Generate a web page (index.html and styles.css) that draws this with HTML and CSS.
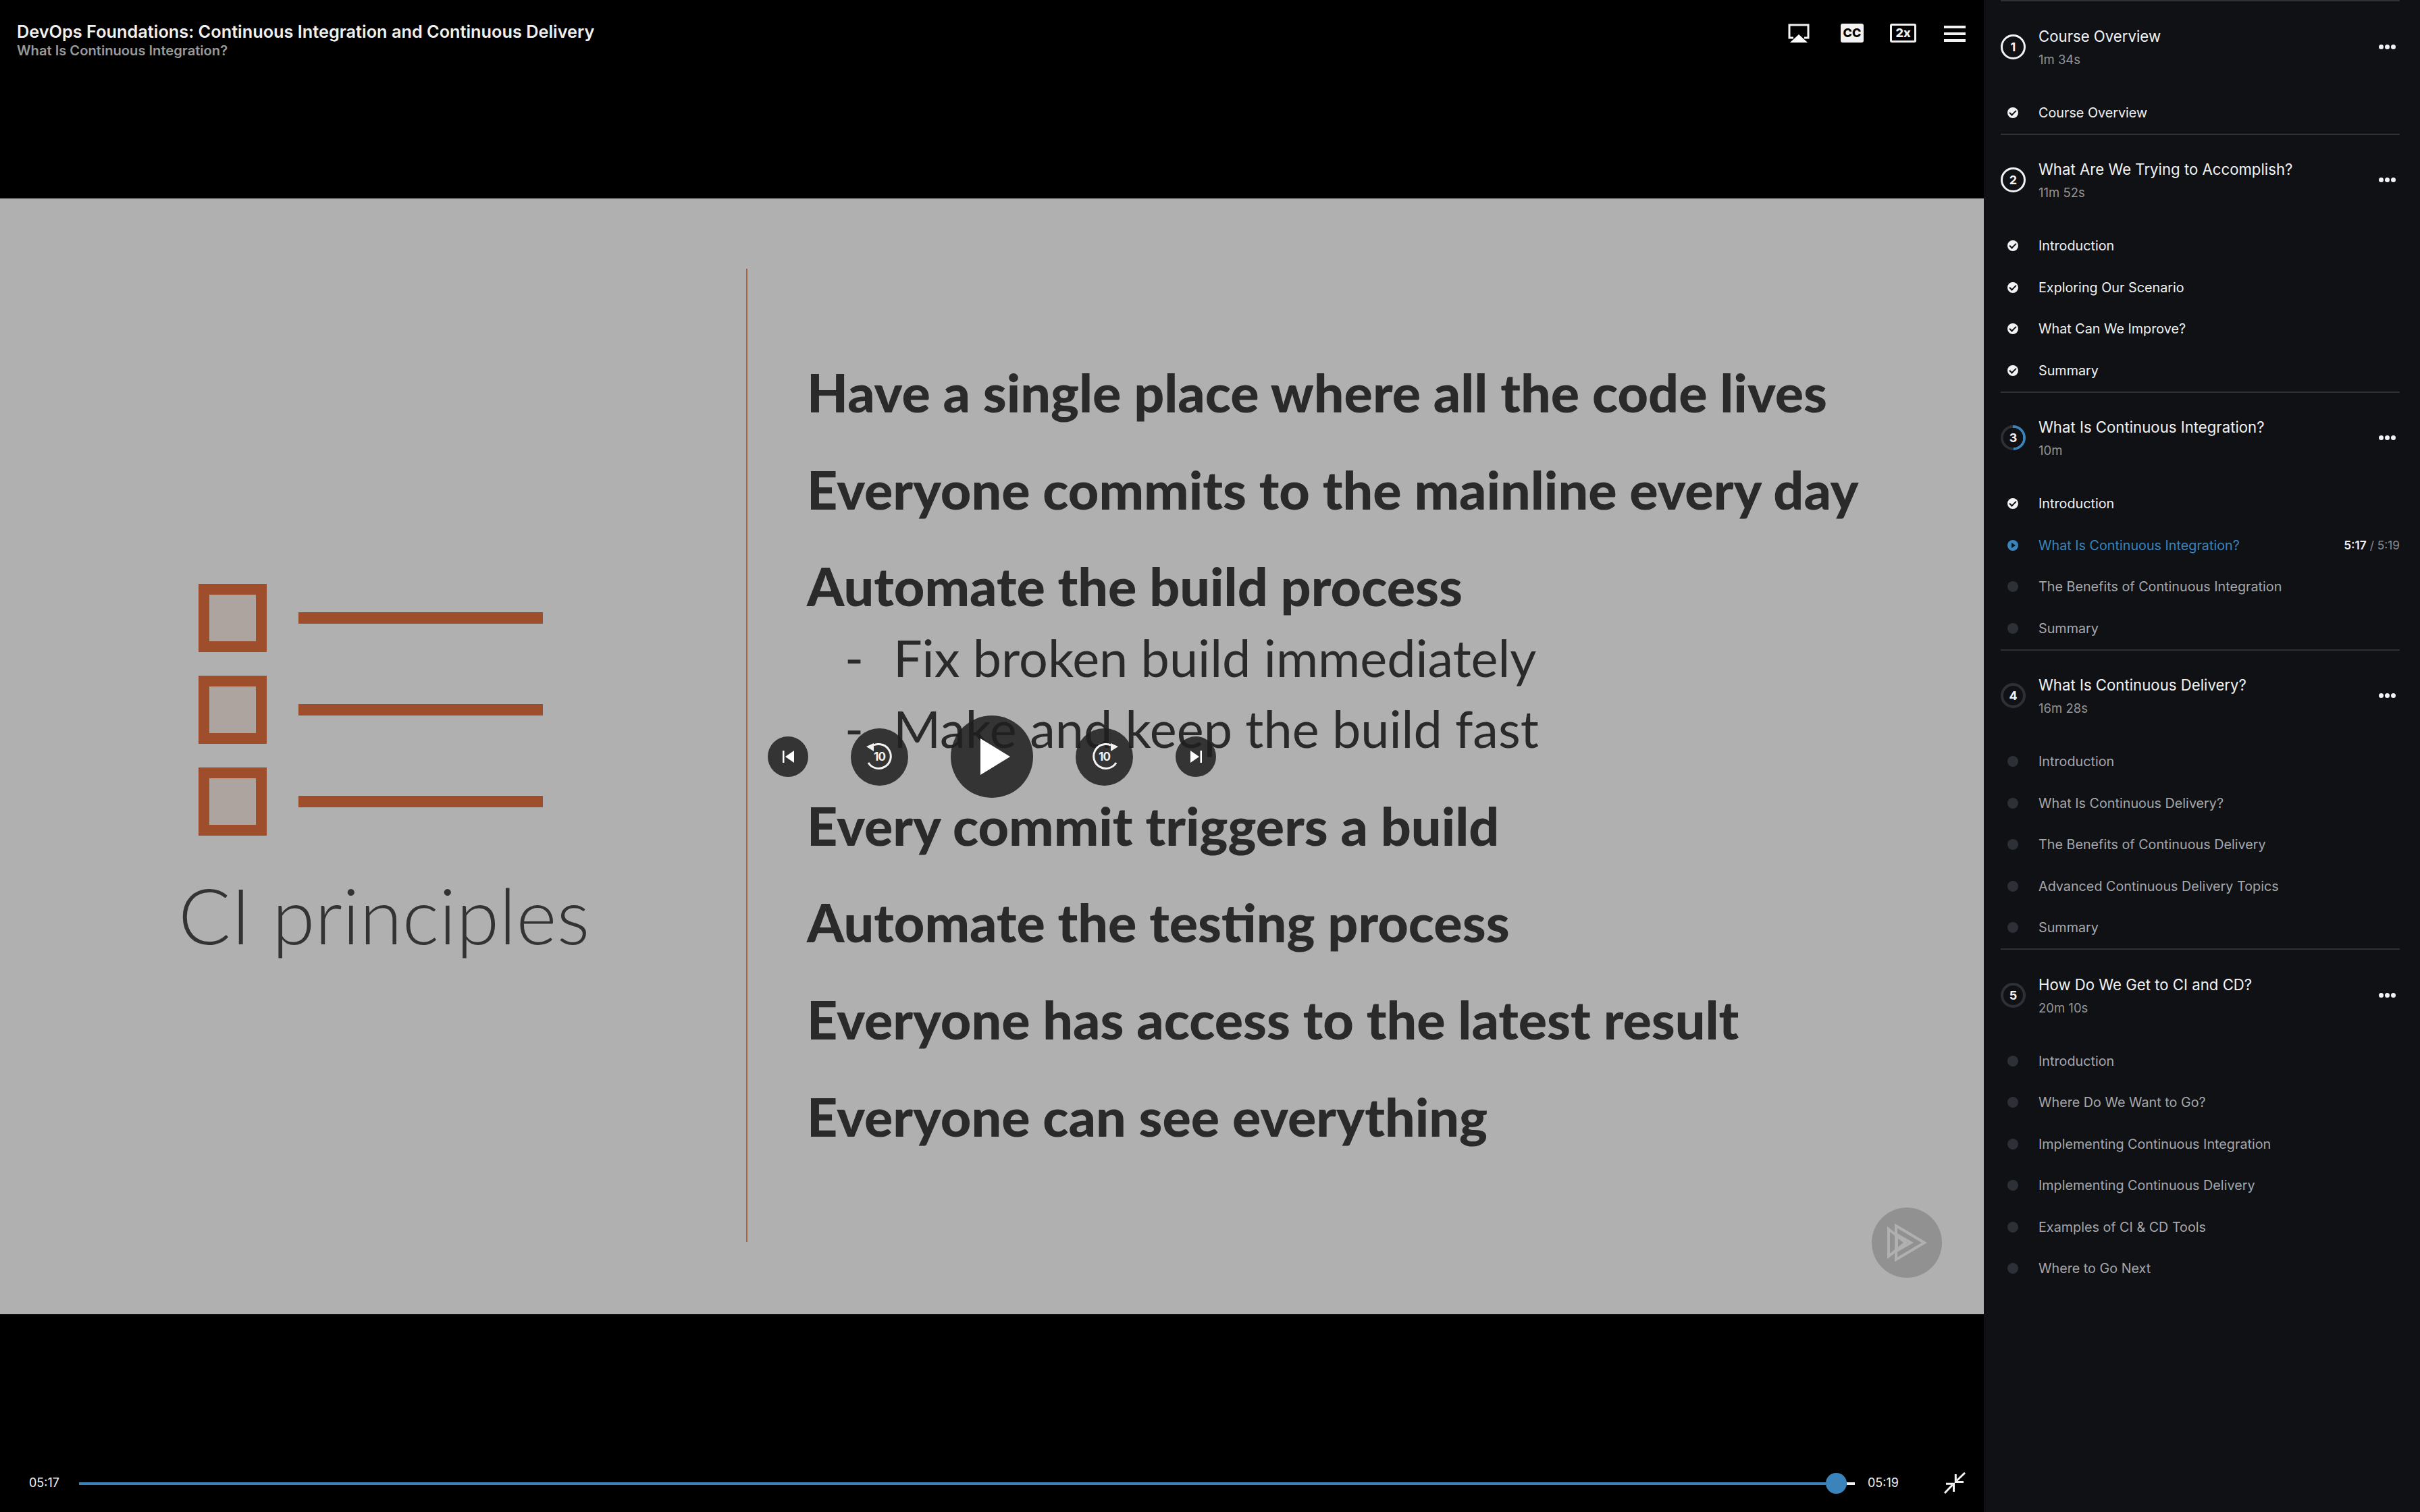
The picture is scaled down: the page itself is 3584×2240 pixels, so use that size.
FILE: index.html
```html
<!DOCTYPE html>
<html lang="en">
<head>
    <meta charset="UTF-8">
    <title>What Is Continuous Integration?</title>
    <link rel="stylesheet" href="styles.css">
</head>
<body>
    <div class="player">
        <header class="top-bar">
            <div class="titles">
                <div class="course-title">DevOps Foundations: Continuous Integration and Continuous Delivery</div>
                <div class="clip-title">What Is Continuous Integration?</div>
            </div>
            <div class="top-icons">
                <svg class="icon-airplay" width="32" height="28" viewBox="0 0 32 28">
                    <path d="M8 21H2V2h28v19h-6" fill="none" stroke="#f2f2f2" stroke-width="3"/>
                    <path d="M16 16L29 28H3z" fill="#fff"/>
                </svg>
                <div class="icon-cc">CC</div>
                <div class="icon-speed">2x</div>
                <div class="icon-menu"><span></span><span></span><span></span></div>
            </div>
        </header>

        <section class="slide">
            <div class="slide-left">
                <div class="check-row"><div class="check-box"></div><div class="check-line"></div></div>
                <div class="check-row"><div class="check-box"></div><div class="check-line"></div></div>
                <div class="check-row"><div class="check-box"></div><div class="check-line"></div></div>
                <div class="slide-title">CI principles</div>
            </div>
            <div class="slide-rule"></div>
            <div class="slide-list">
                <p class="point">Have a single place where all the code lives</p>
                <p class="point">Everyone commits to the mainline every day</p>
                <p class="point">Automate the build process</p>
                <p class="sub-point first"><span class="dash">-</span>Fix broken build immediately</p>
                <p class="sub-point"><span class="dash">-</span>Make and keep the build fast</p>
                <p class="point after-sub">Every commit triggers a build</p>
                <p class="point">Automate the testing process</p>
                <p class="point">Everyone has access to the latest result</p>
                <p class="point">Everyone can see everything</p>
            </div>
            <div class="watermark">
                <svg width="60" height="56" viewBox="0 0 60 56">
                    <path d="M3 8L28 28 3 48z" fill="none" stroke="#b0b0b0" stroke-width="4"/>
                    <path d="M14 3L56 28 14 53z" fill="none" stroke="#b0b0b0" stroke-width="4"/>
                    <path d="M15 16L36 28 15 40z" fill="none" stroke="#b0b0b0" stroke-width="4"/>
                </svg>
            </div>
        </section>

        <footer class="bottom-bar">
            <span class="time">05:17</span>
            <div class="track">
                <div class="track-done"></div>
                <div class="thumb"></div>
                <div class="track-left"></div>
            </div>
            <span class="time">05:19</span>
            <svg class="icon-collapse" width="32" height="32" viewBox="0 0 32 32">
                <path d="M31 1L19 12.5M29 14.5H17.3V3" fill="none" stroke="#f2f2f2" stroke-width="3"/>
                <path d="M1 31L12.5 19M3 17.3H14.5V29" fill="none" stroke="#f2f2f2" stroke-width="3"/>
            </svg>
        </footer>

        <div class="controls">
            <button class="ctl ctl-sm">
                <svg width="17" height="18" viewBox="0 0 17 18"><path d="M0 0h2.5v18H0zM17 0v18L4 9z" fill="#fff"/></svg>
            </button>
            <button class="ctl ctl-md">
                <svg width="40" height="40" viewBox="0 0 40 40">
                    <path d="M11 3A18 18 0 1 1 3 29" fill="none" stroke="#f2f2f2" stroke-width="3"/>
                    <path d="M0 5L11 0V12z" fill="#f2f2f2"/>
                </svg>
                <span class="ten">10</span>
            </button>
            <button class="ctl ctl-lg">
                <svg width="44" height="54" viewBox="0 0 44 54"><path d="M0 0L44 27 0 54z" fill="#fff"/></svg>
            </button>
            <button class="ctl ctl-md">
                <svg width="40" height="40" viewBox="0 0 40 40">
                    <path d="M29 3A18 18 0 1 0 37 29" fill="none" stroke="#f2f2f2" stroke-width="3"/>
                    <path d="M40 5L29 0V12z" fill="#f2f2f2"/>
                </svg>
                <span class="ten">10</span>
            </button>
            <button class="ctl ctl-sm">
                <svg width="17" height="18" viewBox="0 0 17 18"><path d="M14.5 0H17v18h-2.5zM0 0v18l13-9z" fill="#fff"/></svg>
            </button>
        </div>
    </div>

    <aside class="sidebar">
        <div class="module">
            <div class="module-head">
                <div class="num">1</div>
                <div class="module-text"><div class="module-name">Course Overview</div><div class="module-len">1m 34s</div></div>
                <div class="dots"><span></span><span></span><span></span></div>
            </div>
            <div class="clip done"><span class="clip-dot"></span>Course Overview</div>
        </div>
        <div class="module">
            <div class="module-head">
                <div class="num">2</div>
                <div class="module-text"><div class="module-name">What Are We Trying to Accomplish?</div><div class="module-len">11m 52s</div></div>
                <div class="dots"><span></span><span></span><span></span></div>
            </div>
            <div class="clip done"><span class="clip-dot"></span>Introduction</div>
            <div class="clip done"><span class="clip-dot"></span>Exploring Our Scenario</div>
            <div class="clip done"><span class="clip-dot"></span>What Can We Improve?</div>
            <div class="clip done"><span class="clip-dot"></span>Summary</div>
        </div>
        <div class="module">
            <div class="module-head">
                <div class="num partial">3</div>
                <div class="module-text"><div class="module-name">What Is Continuous Integration?</div><div class="module-len">10m</div></div>
                <div class="dots"><span></span><span></span><span></span></div>
            </div>
            <div class="clip done"><span class="clip-dot"></span>Introduction</div>
            <div class="clip current"><span class="clip-dot"></span>What Is Continuous Integration?<span class="clip-time"><b>5:17</b> / 5:19</span></div>
            <div class="clip"><span class="clip-dot"></span>The Benefits of Continuous Integration</div>
            <div class="clip"><span class="clip-dot"></span>Summary</div>
        </div>
        <div class="module">
            <div class="module-head">
                <div class="num empty">4</div>
                <div class="module-text"><div class="module-name">What Is Continuous Delivery?</div><div class="module-len">16m 28s</div></div>
                <div class="dots"><span></span><span></span><span></span></div>
            </div>
            <div class="clip"><span class="clip-dot"></span>Introduction</div>
            <div class="clip"><span class="clip-dot"></span>What Is Continuous Delivery?</div>
            <div class="clip"><span class="clip-dot"></span>The Benefits of Continuous Delivery</div>
            <div class="clip"><span class="clip-dot"></span>Advanced Continuous Delivery Topics</div>
            <div class="clip"><span class="clip-dot"></span>Summary</div>
        </div>
        <div class="module">
            <div class="module-head">
                <div class="num empty">5</div>
                <div class="module-text"><div class="module-name">How Do We Get to CI and CD?</div><div class="module-len">20m 10s</div></div>
                <div class="dots"><span></span><span></span><span></span></div>
            </div>
            <div class="clip"><span class="clip-dot"></span>Introduction</div>
            <div class="clip"><span class="clip-dot"></span>Where Do We Want to Go?</div>
            <div class="clip"><span class="clip-dot"></span>Implementing Continuous Integration</div>
            <div class="clip"><span class="clip-dot"></span>Implementing Continuous Delivery</div>
            <div class="clip"><span class="clip-dot"></span>Examples of CI &amp; CD Tools</div>
            <div class="clip"><span class="clip-dot"></span>Where to Go Next</div>
        </div>
    </aside>
</body>
</html>
```
FILE: styles.css
```css
* { box-sizing: border-box; }
html, body { margin: 0; height: 100%; }
body { display: flex; width: 3584px; height: 2240px; overflow: hidden; background: #000; font-family: Inter, "Liberation Sans", sans-serif; }

.player { position: relative; display: flex; flex-direction: column; width: 2938px; height: 2240px; }

/* top bar */
.top-bar { display: flex; justify-content: space-between; height: 294px; padding: 32px 27px 0 25px; }
.course-title { font-size: 25.3px; line-height: 29px; font-weight: 600; color: #f0f0f0; }
.clip-title { font-size: 20.15px; line-height: 28px; font-weight: 600; color: #999; }
.top-icons { display: flex; align-items: flex-start; padding-top: 3px; }
.icon-airplay { margin-right: 46px; }
.icon-cc { width: 34px; height: 28px; margin-right: 39px; background: #f2f2f2; border-radius: 3px; color: #000; font-size: 18px; font-weight: 800; line-height: 28px; text-align: center; }
.icon-speed { width: 39px; height: 28px; margin-right: 41px; border: 3px solid #f2f2f2; border-radius: 3px; color: #f2f2f2; font-size: 18px; font-weight: 800; line-height: 22px; text-align: center; }
.icon-menu { display: flex; flex-direction: column; gap: 6px; width: 32px; padding-top: 3px; }
.icon-menu span { height: 4px; background: #f2f2f2; }

/* slide */
.slide { position: relative; display: flex; height: 1653px; background: #b0b0b0; color: #2a2a2a; font-family: Lato, sans-serif; }
.slide-left { width: 1105px; padding: 571px 0 0 294px; }
.check-row { display: flex; align-items: center; height: 101px; margin-bottom: 35px; }
.check-box { width: 101px; height: 101px; border: 16px solid #9e4e2b; background: #aea49f; }
.check-line { width: 362px; height: 17px; margin-left: 47px; background: #9e4e2b; }
.slide-title { margin: 51px 0 0 -30px; font-size: 115px; line-height: 130px; font-weight: 300; color: #333; white-space: nowrap; }
.slide-rule { width: 2px; height: 1442px; margin-top: 104px; background: #a0664a; }
.slide-list { flex: 1; padding: 250px 0 0 88px; }
.point { margin: 0; height: 143.6px; font-size: 79px; line-height: 74px; font-weight: 900; white-space: nowrap; }
.sub-point { margin: 0; height: 105.5px; padding-left: 56px; font-size: 75.6px; line-height: 74px; white-space: nowrap; }
.sub-point.first { margin-top: -38px; }
.point.after-sub { margin-top: 38px; }
.dash { display: inline-block; width: 72px; }
.watermark { position: absolute; left: 2772px; top: 1495px; display: flex; align-items: center; justify-content: center; width: 104px; height: 104px; border-radius: 50%; background: #919191; }

/* bottom bar */
.bottom-bar { display: flex; align-items: flex-end; height: 293px; padding: 0 27px 27px 43px; }
.time { width: 44px; margin-bottom: 5px; color: #f2f2f2; font-size: 18px; line-height: 22px; white-space: nowrap; }
.track { display: flex; align-items: center; width: 2630px; margin: 0 19px 0 30px; }
.track-done { flex: 1; height: 4px; background: #3a84bb; }
.thumb { width: 31px; height: 31px; border-radius: 50%; background: #3a84bb; }
.track-left { width: 12px; height: 4px; background: #f2f2f2; }
.icon-collapse { margin-left: 69px; }

/* big transport buttons over the slide */
.controls { position: absolute; left: 1137px; top: 1060px; display: flex; align-items: center; gap: 63px; height: 122px; }
.ctl { position: relative; display: flex; align-items: center; justify-content: center; padding: 0; border: 0; border-radius: 50%; background: rgba(31, 31, 31, 0.85); color: #f2f2f2; font-family: Inter, sans-serif; }
.ctl-sm { width: 60px; height: 60px; }
.ctl-md { width: 85px; height: 85px; }
.ctl-lg { width: 122px; height: 122px; padding-left: 9px; }
.ten { position: absolute; left: 0; right: 0; top: 30px; font-size: 17px; line-height: 24px; font-weight: 700; letter-spacing: -1px; text-align: center; }

/* course outline */
.sidebar { width: 646px; height: 2240px; padding: 0 30px 0 25px; background: #0f1115; }
.module { border-top: 2px solid #2e3038; }
.module-head { display: flex; align-items: center; height: 134px; }
.num { display: flex; align-items: center; justify-content: center; width: 37px; height: 37px; margin-right: 19px; border: 3px solid #f2f2f2; border-radius: 50%; color: #f2f2f2; font-size: 18px; font-weight: 700; }
.num.partial { border: 0; background: radial-gradient(circle closest-side, #0f1115 calc(100% - 4px), transparent calc(100% - 3.5px)), conic-gradient(#3a84bb 0 50%, #2e3038 0); }
.num.empty { border: 4px solid #2e3038; }
.module-text { flex: 1; }
.module-name { font-size: 22.2px; line-height: 30px; color: #f2f2f2; }
.module-len { margin-top: 7px; font-size: 18.5px; line-height: 24px; color: #949598; }
.dots { display: flex; gap: 2px; margin-right: 6px; }
.dots span { width: 7px; height: 7px; border-radius: 50%; background: #f2f2f2; }
.clip { display: flex; align-items: center; height: 61.5px; font-size: 19.75px; color: #a6a7aa; }
.clip-dot { display: flex; align-items: center; justify-content: center; flex: none; width: 16px; height: 16px; margin: 0 30px 0 10px; border-radius: 50%; background: #2e3038; }
.clip.done { color: #f2f2f2; }
.clip.done .clip-dot { background: #f2f2f2; }
.clip.done .clip-dot::after { content: ""; width: 8px; height: 4px; margin-top: -2px; border-left: 2px solid #0f1115; border-bottom: 2px solid #0f1115; transform: rotate(-45deg); }
.clip.current { color: #3a84bb; }
.clip.current .clip-dot { background: #3a84bb; }
.clip.current .clip-dot::after { content: ""; margin-left: 2px; border-left: 6px solid #0f1115; border-top: 4px solid transparent; border-bottom: 4px solid transparent; }
.clip-time { margin-left: auto; font-size: 17.3px; color: #8a8b8e; }
.clip-time b { font-weight: 600; color: #f2f2f2; }
```
